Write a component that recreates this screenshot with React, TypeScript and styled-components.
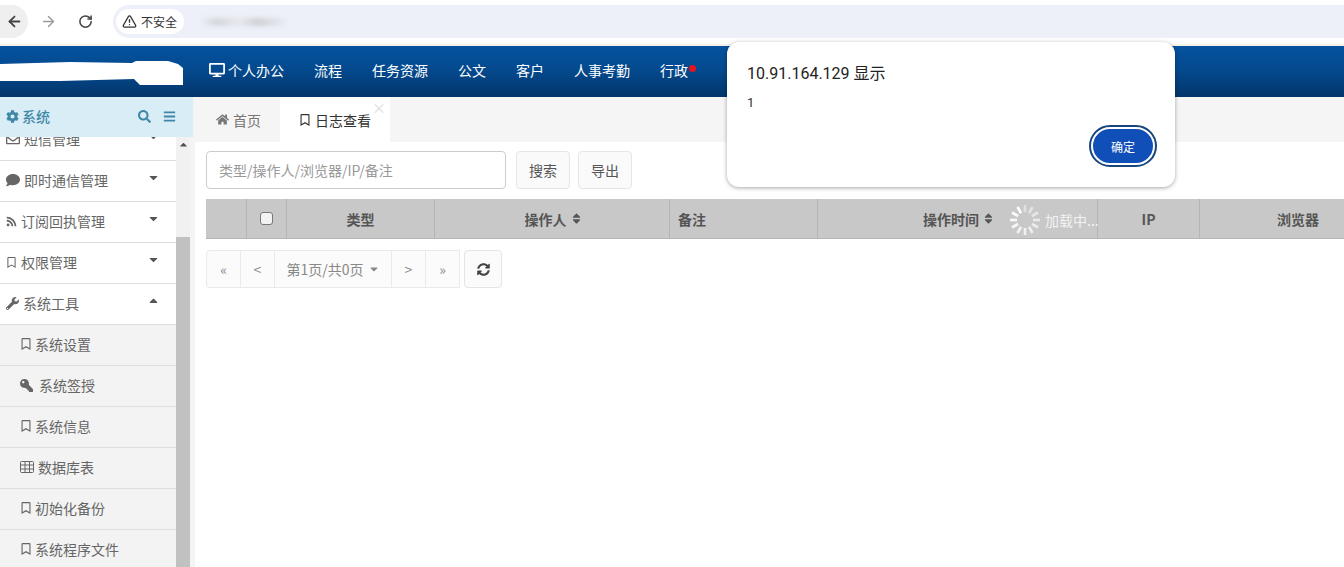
import { ReactNode } from 'react';
import styled, { createGlobalStyle } from 'styled-components';
import { ArrowLeft, ArrowRight, RotateCw, TriangleAlert } from 'lucide-react';
import {
  FaBars,
  FaCaretDown,
  FaCaretUp,
  FaCog,
  FaComment,
  FaDesktop,
  FaHome,
  FaKey,
  FaRegBookmark,
  FaRegEnvelope,
  FaRss,
  FaSearch,
  FaSort,
  FaSyncAlt,
  FaWrench,
} from 'react-icons/fa';

const GlobalStyle = createGlobalStyle`
  html, body {
    margin: 0;
    padding: 0;
    background: #fff;
  }
  body {
    font-family: "Noto Sans CJK SC", "Liberation Sans", sans-serif;
    font-size: 14px;
    color: #555;
  }
  * { box-sizing: border-box; }
`;

const Page = styled.div`
  position: relative;
  width: 1344px;
  height: 567px;
  overflow: hidden;
  display: flex;
  flex-direction: column;
`;

/* browser chrome */
const BrowserBar = styled.div`
  height: 46px;
  flex: none;
  display: flex;
  align-items: flex-start;
  padding: 5px 0 0 0;
  background: #fff;
  border-bottom: 2px solid #f6f3ea;
`;

const ChromeButton = styled.div<{ $w: number; $active?: boolean; $muted?: boolean }>`
  width: ${(p) => p.$w}px;
  height: 33px;
  display: flex;
  align-items: center;
  justify-content: center;
  color: ${(p) => (p.$muted ? '#9a9a9a' : '#444')};
  background: ${(p) => (p.$active ? '#efefef' : 'transparent')};
  border-radius: 0 17px 17px 0;
`;

const AddressBar = styled.div`
  margin-left: 11px;
  flex: 1;
  height: 33px;
  display: flex;
  align-items: center;
  gap: 15px;
  padding-left: 3px;
  background: #edf0f8;
  border-radius: 17px 0 0 17px;
`;

const SecurityChip = styled.div`
  width: 68px;
  height: 25px;
  display: flex;
  align-items: center;
  justify-content: center;
  gap: 4px;
  padding-right: 1px;
  background: #fff;
  border-radius: 13px;
  color: #333;
  font-size: 12px;
`;

const BlurredUrl = styled.div`
  width: 90px;
  height: 8px;
  border-radius: 3px;
  background: linear-gradient(90deg, #edf0f8 0, #d4d6dc 20%, #e6e8ee 45%, #cfd1d7 65%, #dfe1e7 85%, #edf0f8 100%);
  filter: blur(2px);
`;

/* top nav */
const TopNav = styled.div`
  height: 51px;
  flex: none;
  display: flex;
  align-items: center;
  background: linear-gradient(180deg, #05529e 0%, #044a8f 45%, #03356a 100%);
`;

const Logo = styled.div`
  width: 194px;
  flex: none;
  height: 51px;
  display: flex;
  align-items: flex-start;
  padding-top: 15px;
`;

const NavItem = styled.div`
  position: relative;
  padding: 0 15px 4px;
  display: flex;
  align-items: center;
  gap: 3px;
  color: #fff;
  font-size: 14px;
  white-space: nowrap;
`;

const RedDot = styled.span`
  position: absolute;
  right: 7px;
  top: 5px;
  width: 7px;
  height: 7px;
  border-radius: 50%;
  background: #e8141c;
`;

/* body */
const Body = styled.div`
  flex: 1;
  min-height: 0;
  display: flex;
`;

const Sidebar = styled.div`
  width: 195px;
  flex: none;
  display: flex;
  flex-direction: column;
  background: #f4f4f4;
  min-height: 0;
`;

const SideHead = styled.div`
  width: 193px;
  height: 40px;
  flex: none;
  display: flex;
  align-items: center;
  padding: 0 17px 2px 6px;
  gap: 3px;
  background: #d9edf7;
  color: #3f88a6;
  font-size: 14px;
  font-weight: 500;
`;

const SideHeadIcons = styled.div`
  margin-left: auto;
  display: flex;
  align-items: center;
  gap: 12px;
`;

const SideScroll = styled.div`
  flex: 1;
  min-height: 0;
  display: flex;
  overflow: hidden;
`;

const Menu = styled.div`
  width: 176px;
  flex: none;
  margin-top: -17px;
`;

const MenuItem = styled.div<{ $sub?: boolean }>`
  height: 41px;
  display: flex;
  align-items: center;
  gap: ${(p) => (p.$sub ? '3px' : '4px')};
  padding: 0 16px 2px ${(p) => (p.$sub ? '20px' : '6px')};
  background: ${(p) => (p.$sub ? '#f3f3f3' : '#fff')};
  border-bottom: 1px solid #dedede;
  color: #666;
  font-size: 14px;
  white-space: nowrap;
`;

const Caret = styled.span`
  margin-left: auto;
  margin-top: -5px;
  display: flex;
  color: #555;
`;

const ScrollTrack = styled.div`
  width: 14px;
  flex: none;
  display: flex;
  flex-direction: column;
  background: #f1f1f1;
`;

const ScrollArrow = styled.div`
  height: 100px;
  flex: none;
  display: flex;
  justify-content: center;
  padding-top: 2px;
  color: #505050;
`;

const ScrollThumb = styled.div`
  flex: 1;
  background: #c1c1c1;
`;

const Main = styled.div`
  flex: 1;
  min-width: 0;
  display: flex;
  flex-direction: column;
`;

const TabBar = styled.div`
  height: 45px;
  flex: none;
  display: flex;
  background: #f5f5f5;
`;

const Tab = styled.div<{ $active?: boolean }>`
  position: relative;
  height: 45px;
  display: flex;
  align-items: center;
  gap: 4px;
  padding: 0 19px 0 ${(p) => (p.$active ? '19px' : '21px')};
  background: ${(p) => (p.$active ? '#fff' : 'transparent')};
  color: ${(p) => (p.$active ? '#333' : '#777')};
  font-size: 14px;
`;

const TabClose = styled.span`
  position: absolute;
  right: 4px;
  top: 3px;
  color: #ddd;
  font-size: 14px;
  line-height: 14px;
`;

const Content = styled.div`
  padding: 9px 0 0 11px;
`;

const Toolbar = styled.div`
  display: flex;
  gap: 8px;
`;

const SearchInput = styled.div`
  width: 300px;
  height: 38px;
  display: flex;
  align-items: center;
  margin-right: 2px;
  padding: 0 12px;
  border: 1px solid #ccc;
  border-radius: 4px;
  color: #999;
  font-size: 14px;
`;

const ToolButton = styled.div`
  width: 54px;
  height: 38px;
  display: flex;
  align-items: center;
  justify-content: center;
  background: #fafafa;
  border: 1px solid #e6e6e6;
  border-radius: 4px;
  color: #555;
  font-size: 14px;
`;

const TableHead = styled.div`
  margin-top: 10px;
  width: 1334px;
  height: 40px;
  display: grid;
  grid-template-columns: 41px 40px 148px 235px 148px 280px 102px 196px;
  background: #c8c8c8;
  border-bottom: 1px solid #b4b4b4;
  overflow: hidden;
`;

const HeadCell = styled.div<{ $left?: boolean }>`
  display: flex;
  align-items: center;
  justify-content: ${(p) => (p.$left ? 'flex-start' : 'center')};
  gap: 3px;
  padding-left: ${(p) => (p.$left ? '8px' : '0')};
  border-right: 1px solid #b4b4b4;
  color: #555;
  font-size: 14px;
  font-weight: 700;
  white-space: nowrap;
  &:last-child { border-right: 0; }
  svg { margin-right: -3px; }
`;

const CheckBox = styled.span`
  width: 13px;
  height: 13px;
  background: #f2f2f2;
  border: 1px solid #777;
  border-radius: 3px;
`;

const Pager = styled.div`
  margin-top: 11px;
  display: flex;
`;

const PageButton = styled.div<{ $wide?: boolean }>`
  width: ${(p) => (p.$wide ? '118px' : '35px')};
  height: 38px;
  display: flex;
  align-items: center;
  justify-content: center;
  gap: 4px;
  background: #fbfbfb;
  border: 1px solid #eaeaea;
  margin-right: -1px;
  color: #888;
  font-size: 14px;
  &:first-child { border-radius: 4px 0 0 4px; }
`;

const RefreshButton = styled.div`
  width: 38px;
  height: 38px;
  margin-left: 5px;
  display: flex;
  align-items: center;
  justify-content: center;
  background: #fbfbfb;
  border: 1px solid #e4e4e4;
  border-radius: 4px;
  color: #444;
`;

/* overlays */
const Loading = styled.div`
  position: absolute;
  left: 1008px;
  top: 203px;
  display: flex;
  align-items: center;
  gap: 3px;
  color: #f2f2f2;
  font-size: 14px;
  line-height: 32px;
  white-space: nowrap;
`;

const Dialog = styled.div`
  position: absolute;
  left: 727px;
  top: 42px;
  width: 448px;
  height: 145px;
  padding: 22px 18px 0 20px;
  display: flex;
  flex-direction: column;
  background: #fff;
  border-radius: 12px;
  box-shadow: 0 1px 4px rgba(0, 0, 0, 0.35);
  color: #222;
`;

const DialogTitle = styled.div`
  font-family: Roboto, "Noto Sans CJK SC", sans-serif;
  font-size: 16px;
  line-height: 20px;
`;

const DialogText = styled.div`
  margin-top: 11px;
  font-family: Roboto, sans-serif;
  font-size: 13px;
  line-height: 16px;
  color: #333;
`;

const DialogActions = styled.div`
  margin-top: 16px;
  display: flex;
  justify-content: flex-end;
`;

const ConfirmButton = styled.div`
  width: 64px;
  height: 38px;
  margin-right: 2px;
  display: flex;
  align-items: center;
  justify-content: center;
  background: #114fb8;
  border: 2px solid #fff;
  outline: 2px solid #17457f;
  border-radius: 19px;
  color: #fff;
  font-size: 12px;
`;

const NAV = ['流程', '任务资源', '公文', '客户', '人事考勤'];

const GridIcon = () => (
  <svg width="14" height="12" viewBox="0 0 14 12" fill="none" stroke="currentColor" strokeWidth="1" style={{ marginRight: 1 }}>
    <rect x="0.5" y="0.5" width="13" height="11" rx="1" />
    <path d="M0.5 4h13M0.5 8h13M5 0.5v11M9.5 0.5v11" />
  </svg>
);

const LogoBlob = () => (
  <svg width="183" height="25" viewBox="0 0 183 25">
    <path d="M0 3 L70 1 L132 2 L136 0 L168 0 L178 3 L183 7 L183 24 L140 24 L134 18 L60 20 L0 20 Z" fill="#fff" />
  </svg>
);

const GROUPS: { icon: ReactNode; label: string; open?: boolean }[] = [
  { icon: <FaRegEnvelope size={14} />, label: '短信管理' },
  { icon: <FaComment size={14} />, label: '即时通信管理' },
  { icon: <FaRss size={11} />, label: '订阅回执管理' },
  { icon: <FaRegBookmark size={11} />, label: '权限管理' },
  { icon: <FaWrench size={13} />, label: '系统工具', open: true },
];

const SUBS: { icon: ReactNode; label: string }[] = [
  { icon: <FaRegBookmark size={12} />, label: '系统设置' },
  { icon: <FaKey size={13} style={{ transform: 'scaleX(-1)', marginRight: 3 }} />, label: '系统签授' },
  { icon: <FaRegBookmark size={12} />, label: '系统信息' },
  { icon: <GridIcon />, label: '数据库表' },
  { icon: <FaRegBookmark size={12} />, label: '初始化备份' },
  { icon: <FaRegBookmark size={12} />, label: '系统程序文件' },
];

function Spinner() {
  return (
    <svg width="34" height="34" viewBox="0 0 34 34">
      {new Array(12).fill(0).map((_, i) => (
        <line
          key={i}
          x1="17"
          y1="2"
          x2="17"
          y2="9"
          stroke="#fff"
          strokeWidth="2.6"
          opacity={0.45 + (i % 12) * 0.05}
          transform={`rotate(${i * 30} 17 17)`}
        />
      ))}
    </svg>
  );
}

export default function App() {
  return (
    <Page>
      <GlobalStyle />
      <BrowserBar>
        <ChromeButton $w={28} $active>
          <ArrowLeft size={17} strokeWidth={2.5} />
        </ChromeButton>
        <ChromeButton $w={40} $muted>
          <ArrowRight size={17} />
        </ChromeButton>
        <ChromeButton $w={34}>
          <RotateCw size={15} strokeWidth={2.4} />
        </ChromeButton>
        <AddressBar>
          <SecurityChip>
            <TriangleAlert size={15} strokeWidth={2.2} />
            不安全
          </SecurityChip>
          <BlurredUrl />
        </AddressBar>
      </BrowserBar>

      <TopNav>
        <Logo>
          <LogoBlob />
        </Logo>
        <NavItem>
          <FaDesktop size={16} />
          个人办公
        </NavItem>
        {NAV.map((label) => (
          <NavItem key={label}>{label}</NavItem>
        ))}
        <NavItem>
          行政
          <RedDot />
        </NavItem>
      </TopNav>

      <Body>
        <Sidebar>
          <SideHead>
            <FaCog size={13} />
            系统
            <SideHeadIcons>
              <FaSearch size={13} />
              <FaBars size={13} />
            </SideHeadIcons>
          </SideHead>
          <SideScroll>
            <Menu>
              {GROUPS.map((g) => (
                <MenuItem key={g.label}>
                  {g.icon}
                  {g.label}
                  <Caret>{g.open ? <FaCaretUp size={13} /> : <FaCaretDown size={13} />}</Caret>
                </MenuItem>
              ))}
              {SUBS.map((s) => (
                <MenuItem $sub key={s.label}>
                  {s.icon}
                  {s.label}
                </MenuItem>
              ))}
            </Menu>
            <ScrollTrack>
              <ScrollArrow>
                <FaCaretUp size={11} />
              </ScrollArrow>
              <ScrollThumb />
            </ScrollTrack>
          </SideScroll>
        </Sidebar>

        <Main>
          <TabBar>
            <Tab>
              <FaHome size={13} />
              首页
            </Tab>
            <Tab $active>
              <FaRegBookmark size={12} />
              日志查看
              <TabClose>×</TabClose>
            </Tab>
          </TabBar>
          <Content>
            <Toolbar>
              <SearchInput>类型/操作人/浏览器/IP/备注</SearchInput>
              <ToolButton>搜索</ToolButton>
              <ToolButton>导出</ToolButton>
            </Toolbar>
            <TableHead>
              <HeadCell />
              <HeadCell>
                <CheckBox />
              </HeadCell>
              <HeadCell>类型</HeadCell>
              <HeadCell>
                操作人
                <FaSort size={13} />
              </HeadCell>
              <HeadCell $left>备注</HeadCell>
              <HeadCell>
                操作时间
                <FaSort size={13} />
              </HeadCell>
              <HeadCell>IP</HeadCell>
              <HeadCell>浏览器</HeadCell>
            </TableHead>
            <Pager>
              <PageButton>«</PageButton>
              <PageButton>&lt;</PageButton>
              <PageButton $wide>
                第1页/共0页
                <FaCaretDown size={12} />
              </PageButton>
              <PageButton>&gt;</PageButton>
              <PageButton>»</PageButton>
              <RefreshButton>
                <FaSyncAlt size={13} />
              </RefreshButton>
            </Pager>
          </Content>
        </Main>
      </Body>

      <Loading>
        <Spinner />
        加载中...
      </Loading>

      <Dialog>
        <DialogTitle>10.91.164.129 显示</DialogTitle>
        <DialogText>1</DialogText>
        <DialogActions>
          <ConfirmButton>确定</ConfirmButton>
        </DialogActions>
      </Dialog>
    </Page>
  );
}
